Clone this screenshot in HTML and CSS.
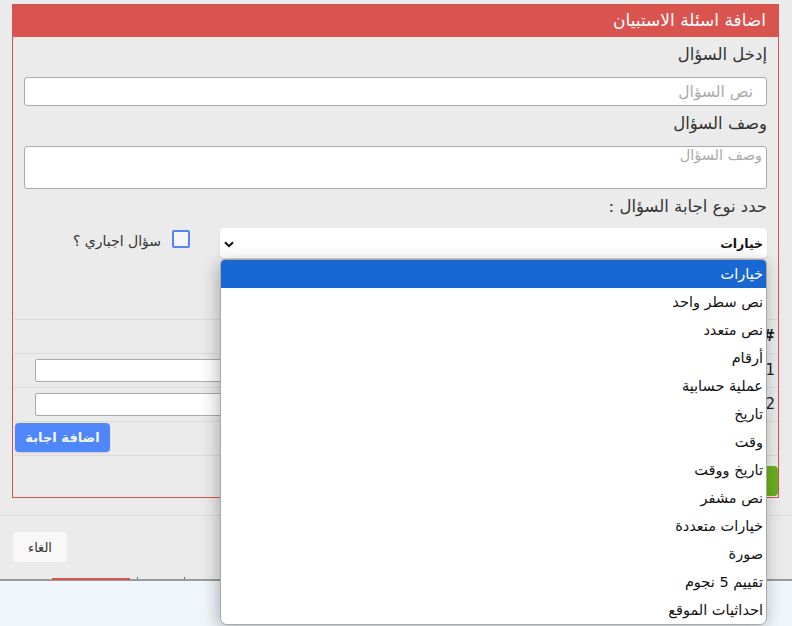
FILE: index.html
```html
<!DOCTYPE html>
<html lang="ar">
<head>
<meta charset="utf-8">
<title>اضافة اسئلة الاستبيان</title>
<link rel="stylesheet" href="styles.css">
</head>
<body>
<div class="modal" dir="rtl">
  <div class="modal-body">
    <div class="panel">
      <div class="panel-heading">اضافة اسئلة الاستبيان</div>
      <div class="panel-body">
        <label class="lbl">إدخل السؤال</label>
        <input class="fc" type="text" placeholder="نص السؤال">
        <label class="lbl">وصف السؤال</label>
        <textarea class="fc ta" placeholder="وصف السؤال"></textarea>
        <label class="lbl lbl-last">حدد نوع اجابة السؤال :</label>
        <div class="type-row">
          <div class="select">
            <span class="select-text">خيارات</span>
            <svg class="chev" width="10" height="7" viewBox="0 0 10 7"><path d="M1 1.2 L5 5.2 L9 1.2" fill="none" stroke="#111" stroke-width="2"/></svg>
          </div>
          <div class="chk">
            <span class="box"></span>
            <span class="chk-text">سؤال اجباري ؟</span>
          </div>
        </div>
        <div class="tbl">
          <div class="tr th">
            <div class="c-num">#</div>
            <div class="c-val"></div>
          </div>
          <div class="tr">
            <div class="c-num">1</div>
            <div class="c-val"><input class="ans" type="text"></div>
          </div>
          <div class="tr">
            <div class="c-num">2</div>
            <div class="c-val"><input class="ans" type="text"></div>
          </div>
          <div class="tr tr-btn">
            <button class="btn-add">اضافة اجابة</button>
          </div>
        </div>
        <div class="save-row"><button class="btn-save" aria-label="حفظ"></button></div>
      </div>
    </div>
  </div>
  <div class="modal-footer">
    <button class="btn-cancel">الغاء</button>
  </div>
</div>
<div class="page">
  <div class="tabline"><span class="tab-active"></span><span class="tick t1"></span><span class="tick t2"></span></div>
</div>

<div class="dropdown" dir="rtl">
  <div class="opt sel">خيارات</div>
  <div class="opt">نص سطر واحد</div>
  <div class="opt">نص متعدد</div>
  <div class="opt">أرقام</div>
  <div class="opt">عملية حسابية</div>
  <div class="opt">تاريخ</div>
  <div class="opt">وقت</div>
  <div class="opt">تاريخ ووقت</div>
  <div class="opt">نص مشفر</div>
  <div class="opt">خيارات متعددة</div>
  <div class="opt">صورة</div>
  <div class="opt">تقييم 5 نجوم</div>
  <div class="opt">احداثيات الموقع</div>
</div>
</body>
</html>
```
FILE: styles.css
```css
* { box-sizing: border-box; }
html, body {
  margin: 0;
  padding: 0;
  width: 792px;
  height: 626px;
  overflow: hidden;
  background: #eff7fc;
  font-family: "DejaVu Sans", "Noto Sans", sans-serif;
  color: #333;
}
.modal {
  height: 579px;
  background: #ebebeb;
}
.modal-body {
  padding: 4px 13px 17px 13px;
}
.panel {
  width: 767px;
  border: 1px solid #d9534f;
  border-top: 0;
}
.panel-heading {
  height: 33px;
  background: #d9534f;
  color: #fff;
  font-size: 17px;
  line-height: 33px;
  padding-right: 12px;
}
.panel-body {
  display: flex;
  flex-direction: column;
  padding: 0 11px 0 10px;
}
.lbl {
  display: block;
  font-size: 16.5px;
  line-height: 20px;
  margin: 8px 0 12px;
  color: #333;
}
.lbl-last { margin-bottom: 11px; }
.fc {
  display: block;
  width: 743px;
  height: 29px;
  border: 1px solid #aaa;
  border-radius: 3px;
  background: #fff;
  padding: 0 13px 0 10px;
  font-family: "DejaVu Sans", sans-serif;
  font-size: 15.5px;
  color: #333;
  outline: none;
}
.fc::placeholder { color: #aaa; }
.ta {
  height: 43px;
  padding: 0 4px 0 10px;
  resize: none;
  font-size: 14.5px;
  line-height: 16px;
}
.type-row {
  display: flex;
  height: 30px;
}
.select {
  width: 547px;
  height: 30px;
  background: #fff;
  border-radius: 4px;
  box-shadow: 0 1px 2px rgba(0,0,0,0.12);
  display: flex;
  align-items: center;
  justify-content: space-between;
  padding: 0 4px 0 4px;
}
.select-text {
  font-size: 12.5px;
  font-weight: bold;
  color: #111;
}
.chev { margin-top: 2px; }
.chk {
  flex: 1;
  display: flex;
  align-items: flex-start;
  padding-right: 30px;
  padding-top: 2px;
}
.box {
  width: 18px;
  height: 18px;
  border: 2px solid #5585f5;
  border-radius: 2px;
  background: #f4f6fb;
}
.chk-text {
  font-size: 14px;
  line-height: 20px;
  margin-right: 11px;
  margin-top: 1px;
  color: #333;
}
.tbl {
  margin-top: 61px;
  margin-left: -9px;
  margin-right: -11px;
}
.tr {
  display: flex;
  height: 34px;
  border-top: 1px solid #dcdcdc;
}
.tr-btn {
  height: 35px;
  border-bottom: 1px solid #dcdcdc;
  justify-content: flex-end;
  padding-left: 1px;
  padding-top: 1px;
}
.c-num {
  width: 30px;
  padding-right: 3px;
  font-size: 15px;
  line-height: 33px;
  color: #222;
}
.th .c-num { font-weight: bold; }
.c-val {
  flex: 1;
  padding: 5px 14px 0 21px;
}
.ans {
  display: block;
  width: 100%;
  height: 23px;
  border: 1px solid #aaa;
  border-radius: 2px;
  background: #fff;
}
.btn-add {
  width: 95px;
  height: 29px;
  border: 0;
  border-radius: 4px;
  background: #4f87fb;
  color: #f2f6ff;
  font-family: "DejaVu Sans", sans-serif;
  font-size: 13px;
  font-weight: bold;
  box-shadow: 0 1px 2px rgba(0,0,0,0.12);
  padding: 0;
}
.save-row {
  display: flex;
  margin: 10px -11px 1px 0;
}
.btn-save {
  width: 64px;
  height: 30px;
  border: 0;
  border-radius: 4px;
  background: #69ae1e;
  padding: 0;
}
.modal-footer {
  border-top: 1px solid #dcdcdc;
  padding: 16px 13px 0;
  display: flex;
  justify-content: flex-end;
}
.btn-cancel {
  width: 54px;
  height: 30px;
  border: 0;
  border-radius: 4px;
  background: #f8f8f8;
  color: #333;
  font-family: "DejaVu Sans", sans-serif;
  font-size: 13px;
  padding: 0;
}
.page {
  height: 47px;
  background: #eff7fc;
}
.tabline {
  position: relative;
  height: 2px;
  background: #9a9a9a;
}
.tab-active {
  position: absolute;
  left: 52px;
  top: -1px;
  width: 78px;
  height: 2px;
  background: #d9534f;
}
.tick {
  position: absolute;
  top: -2px;
  width: 1px;
  height: 2px;
  background: #666;
}
.t1 { left: 137px; }
.t2 { left: 184px; }
.dropdown {
  position: absolute;
  left: 220px;
  top: 259px;
  width: 547px;
  height: 366px;
  background: #fff;
  border: 1px solid #a8a8a8;
  border-radius: 5px 5px 7px 7px;
  overflow: hidden;
  box-shadow: -2px 4px 18px rgba(0,0,0,0.28);
}
.opt {
  height: 28px;
  line-height: 28px;
  padding-right: 3px;
  font-size: 14.5px;
  color: #111;
  white-space: nowrap;
}
.opt.sel {
  background: #1967d2;
  color: #fff;
}
```
